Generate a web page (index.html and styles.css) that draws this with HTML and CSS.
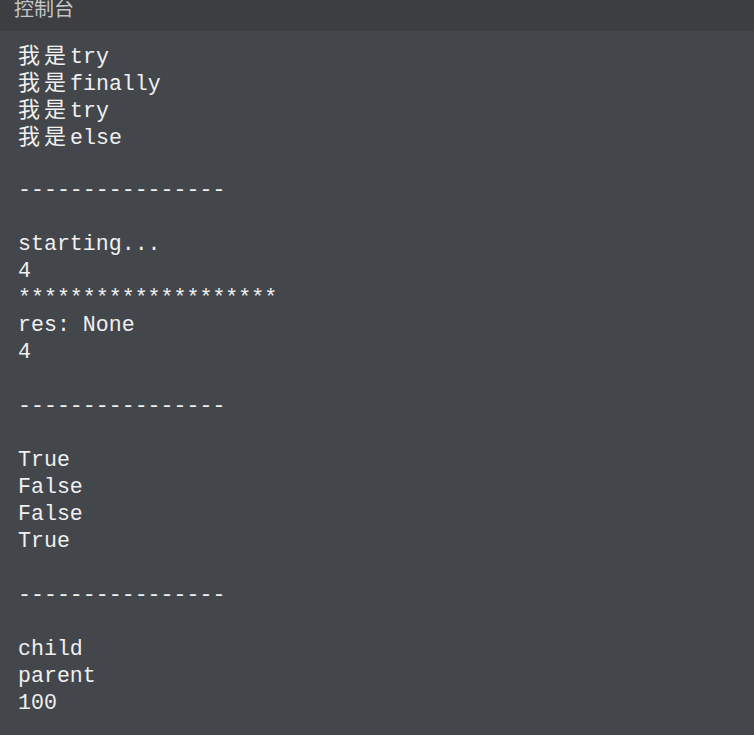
FILE: index.html
```html
<!DOCTYPE html>
<html>
<head>
<meta charset="utf-8">
<link rel="stylesheet" href="styles.css">
</head>
<body>
<div class="console">
  <div class="header"><span class="title">控制台</span></div>
  <div class="output">
    <div class="line"><span class="cn">我是</span>try</div>
    <div class="line"><span class="cn">我是</span>finally</div>
    <div class="line"><span class="cn">我是</span>try</div>
    <div class="line"><span class="cn">我是</span>else</div>
    <div class="line"></div>
    <div class="line">----------------</div>
    <div class="line"></div>
    <div class="line">starting...</div>
    <div class="line">4</div>
    <div class="line">********************</div>
    <div class="line">res: None</div>
    <div class="line">4</div>
    <div class="line"></div>
    <div class="line">----------------</div>
    <div class="line"></div>
    <div class="line">True</div>
    <div class="line">False</div>
    <div class="line">False</div>
    <div class="line">True</div>
    <div class="line"></div>
    <div class="line">----------------</div>
    <div class="line"></div>
    <div class="line">child</div>
    <div class="line">parent</div>
    <div class="line">100</div>
  </div>
</div>
</body>
</html>
```
FILE: styles.css
```css
html, body {
  margin: 0;
  padding: 0;
  background: #43464b;
  height: 100%;
  overflow: hidden;
}
.console {
  display: flex;
  flex-direction: column;
  height: 735px;
}
.header {
  height: 31px;
  background: #3c3e42;
  padding-left: 14px;
  display: flex;
  align-items: flex-start;
  box-sizing: border-box;
  overflow: hidden;
}
.title {
  font-family: "Noto Sans CJK SC", sans-serif;
  font-size: 20px;
  line-height: 16px;
  color: #c4c4c4;
}
.output {
  flex: 1;
  padding: 11px 0 0 18px;
  font-family: "Liberation Mono", "Noto Sans CJK SC", monospace;
  font-size: 21.6px;
  color: #f0f0f0;
}
.line {
  height: 27px;
  line-height: 27px;
  white-space: pre;
}
.cn {
  font-family: "Noto Sans CJK SC", sans-serif;
  font-size: 22px;
  line-height: 1;
  letter-spacing: 4px;
}
```
